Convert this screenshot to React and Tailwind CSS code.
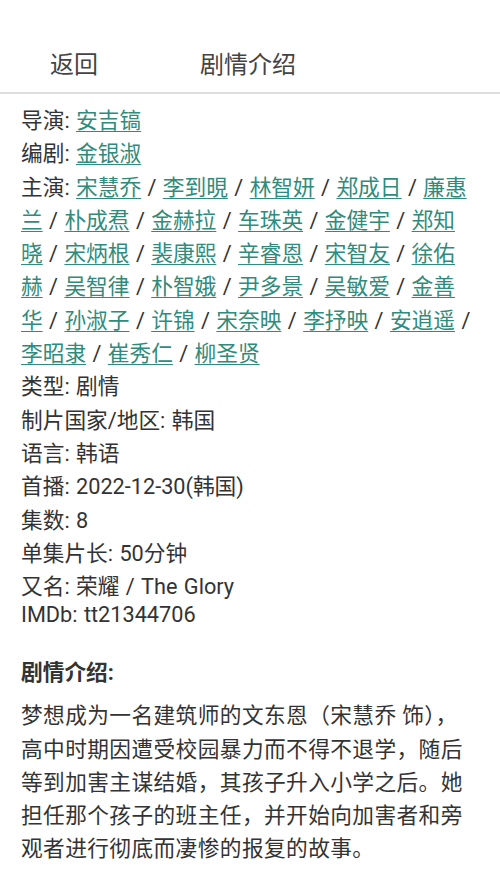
import React from "react";

const cast = ["宋慧乔","李到晛","林智妍","郑成日","廉惠兰","朴成焄","金赫拉","车珠英","金健宇","郑知晓","宋炳根","裴康熙","辛睿恩","宋智友","徐佑赫","吴智律","朴智娥","尹多景","吴敏爱","金善华","孙淑子","许锦","宋奈映","李抒映","安逍遥","李昭隶","崔秀仁","柳圣贤"];

function L({ children }) {
  return <a className="text-[#2f8c7c] underline decoration-1 underline-offset-[3px]">{children}</a>;
}

function Row({ children, cls = "" }) {
  return <div className={"leading-[33.3px] " + cls}>{children}</div>;
}

export default function App() {
  return (
    <div className="w-[500px] h-[890px] bg-white text-[#333] overflow-hidden" style={{ fontFamily: 'Roboto, "Noto Sans CJK SC", sans-serif' }}>
      <div className="h-[94px] border-b-2 border-[#dedede] flex items-end pb-[12px] text-[24px] text-[#444]">
        <div className="ml-[50px] leading-[30px]">返回</div>
        <div className="ml-[102px] leading-[30px]">剧情介绍</div>
      </div>
      <div className="pl-[21px] pr-[26px] pt-[10px] text-[21.7px]">
        <div className="[word-spacing:1px]">
          <Row>导演: <L>安吉镐</L></Row>
          <Row>编剧: <L>金银淑</L></Row>
          <Row>
            主演:{" "}
            {cast.map((n, i) => (
              <React.Fragment key={n}>
                <L>{n}</L>
                {i < cast.length - 1 ? " / " : ""}
              </React.Fragment>
            ))}
          </Row>
          <Row>类型: 剧情</Row>
          <Row>制片国家/地区: 韩国</Row>
          <Row>语言: 韩语</Row>
          <Row>首播: 2022-12-30(韩国)</Row>
          <Row>集数: 8</Row>
          <Row>单集片长: 50分钟</Row>
          <Row>又名: 荣耀 / The Glory</Row>
          <div className="leading-[24px]">IMDb: tt21344706</div>
        </div>
        <div className="mt-[29px] font-bold leading-[33px]">剧情介绍:</div>
        <p className="mt-[10px] leading-[33.2px] tracking-[0.4px] text-[21.7px]">
          梦想成为一名建筑师的文东恩（宋慧乔 饰），高中时期因遭受校园暴力而不得不退学，随后等到加害主谋结婚，其孩子升入小学之后。她担任那个孩子的班主任，并开始向加害者和旁观者进行彻底而凄惨的报复的故事。
        </p>
      </div>
    </div>
  );
}
